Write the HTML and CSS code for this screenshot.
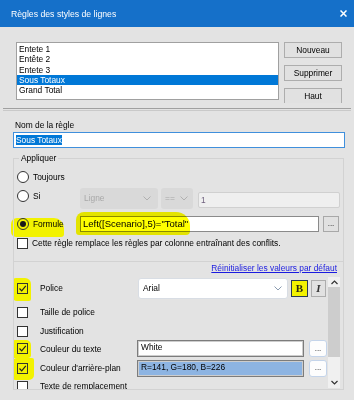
FILE: index.html
```html
<!DOCTYPE html>
<html lang="fr">

<head>
    <meta charset="UTF-8">
    <meta name="viewport" content="width=device-width, initial-scale=1.0">
    <title>Règles des styles de lignes</title>
    <link rel="stylesheet" href="styles.css">
</head>

<body>

    <div class="titlebar">
        <span>Règles des styles de lignes</span>
        <svg class="close" width="7" height="7" viewBox="0 0 7 7">
            <path d="M0.5 0.5 L6.5 6.5 M6.5 0.5 L0.5 6.5" stroke="#fff" stroke-width="1.5" />
        </svg>
    </div>

    <div class="top">
        <div class="list">
            <div class="item">Entete 1</div>
            <div class="item">Entête 2</div>
            <div class="item">Entete 3</div>
            <div class="item sel">Sous Totaux</div>
            <div class="item">Grand Total</div>
        </div>
        <div class="buttons">
            <button class="btn">Nouveau</button>
            <button class="btn">Supprimer</button>
            <button class="btn">Haut</button>
        </div>
    </div>

    <div class="splitter"></div>

    <div class="editor">
        <div class="label">Nom de la règle</div>
        <div class="namefield"><span class="seltext">Sous Totaux</span></div>

        <fieldset class="group">
            <legend>Appliquer</legend>

            <div class="row r-always">
                <div class="opt"><span class="radio"></span>Toujours</div>
            </div>

            <div class="row r-if">
                <div class="opt up"><span class="radio"></span>Si</div>
                <div class="combo off wide">Ligne
                    <svg width="8" height="5" viewBox="0 0 8 5"><path d="M0.5 0.5 L4 4 L7.5 0.5" fill="none" stroke="#b0b0b0" /></svg>
                </div>
                <div class="combo off small">==
                    <svg width="8" height="5" viewBox="0 0 8 5"><path d="M0.5 0.5 L4 4 L7.5 0.5" fill="none" stroke="#b0b0b0" /></svg>
                </div>
                <div class="field off">1</div>
            </div>

            <div class="row r-formula">
                <div class="opt hl-formule"><span class="radio on"></span>Formule</div>
                <div class="formula"><span>Left([Scenario],5)="Total"</span></div>
                <button class="dots square">...</button>
            </div>

            <div class="row r-check">
                <span class="box"></span>
                <span>Cette règle remplace les règles par colonne entraînant des conflits.</span>
            </div>
        </fieldset>

        <div class="panel">
            <div class="reset"><a href="#">Réinitialiser les valeurs par défaut</a></div>
            <div class="scrollarea">
                <div class="props">
                    <div class="prop p1">
                        <span class="box hl hl-police"><svg width="9" height="9" viewBox="0 0 9 9"><path d="M1.5 4.5 L3.7 6.8 L7.8 1.8" fill="none" stroke="#222" stroke-width="1.2" /></svg></span>
                        <span>Police</span>
                        <div class="ctrl">
                            <div class="combo fontcombo">Arial
                                <svg width="8" height="5" viewBox="0 0 8 5"><path d="M0.5 0.5 L4 4 L7.5 0.5" fill="none" stroke="#8a9bb0" /></svg>
                            </div>
                            <button class="style bold">B</button>
                            <button class="style italic">I</button>
                        </div>
                    </div>
                    <div class="prop p2">
                        <span class="box"></span>
                        <span>Taille de police</span>
                    </div>
                    <div class="prop p3">
                        <span class="box"></span>
                        <span>Justification</span>
                    </div>
                    <div class="prop p4">
                        <span class="box hl hl-text"><svg width="9" height="9" viewBox="0 0 9 9"><path d="M1.5 4.5 L3.7 6.8 L7.8 1.8" fill="none" stroke="#222" stroke-width="1.2" /></svg></span>
                        <span>Couleur du texte</span>
                        <div class="ctrl">
                            <div class="valuefield">White</div>
                            <button class="dots round">...</button>
                        </div>
                    </div>
                    <div class="prop p5">
                        <span class="box hl hl-back"><svg width="9" height="9" viewBox="0 0 9 9"><path d="M1.5 4.5 L3.7 6.8 L7.8 1.8" fill="none" stroke="#222" stroke-width="1.2" /></svg></span>
                        <span>Couleur d'arrière-plan</span>
                        <div class="ctrl">
                            <div class="valuefield backcolor">R=141, G=180, B=226</div>
                            <button class="dots round">...</button>
                        </div>
                    </div>
                    <div class="prop p6">
                        <span class="box"></span>
                        <span>Texte de remplacement</span>
                    </div>
                </div>
                <div class="scrollbar">
                    <div class="arrow">
                        <svg width="7" height="5" viewBox="0 0 7 5"><path d="M0.5 4 L3.5 1 L6.5 4" fill="none" stroke="#333" stroke-width="1.2" /></svg>
                    </div>
                    <div class="thumb"></div>
                    <div class="track"></div>
                    <div class="arrow down">
                        <svg width="7" height="5" viewBox="0 0 7 5"><path d="M0.5 1 L3.5 4 L6.5 1" fill="none" stroke="#333" stroke-width="1.2" /></svg>
                    </div>
                </div>
            </div>
        </div>
    </div>

</body>

</html>
```

FILE: styles.css
```css
* {
    box-sizing: border-box;
}

body {
    margin: 0;
    width: 354px;
    height: 400px;
    overflow: hidden;
    background-color: #e3e3e3;
    font-family: "Liberation Sans", Arial, sans-serif;
    font-size: 8.4px;
    color: #000;
}

button {
    font: inherit;
    color: #000;
    padding: 0;
}

.titlebar {
    height: 27px;
    background-color: #1570c9;
    color: white;
    display: flex;
    align-items: center;
    justify-content: space-between;
    padding: 0 7px 0 11px;
    font-size: 8.7px;
}

/* rules list */

.top {
    height: 76px;
    overflow: hidden;
    display: flex;
    align-items: flex-start;
    padding: 15px 0 0 16px;
}

.list {
    width: 263px;
    height: 58px;
    background-color: white;
    border: 1px solid #a0a0a0;
    padding-top: 1px;
}

.item {
    height: 10.3px;
    line-height: 10.3px;
    padding-left: 2px;
    white-space: nowrap;
}

.item.sel {
    background-color: #0078d7;
    color: white;
}

.buttons {
    margin-left: 5px;
    width: 58px;
    display: flex;
    flex-direction: column;
    gap: 7px;
}

.btn {
    height: 16px;
    background-color: #e1e1e1;
    border: 1px solid #adadad;
}

.splitter {
    margin: 5px 3px 0;
    height: 3px;
    border-top: 1px solid #a0a0a0;
    border-bottom: 1px solid #c9c9c9;
}

/* rule editor */

.editor {
    padding: 0 10px 0 13px;
}

.label {
    margin: 8px 0 0 2px;
    height: 12px;
    line-height: 12px;
}

.namefield {
    margin-top: 1px;
    width: 332px;
    height: 16px;
    line-height: 14px;
    background-color: white;
    border: 1px solid #3f8fdc;
    padding-left: 2px;
}

.seltext {
    background-color: #0078d7;
    color: white;
}

.group {
    margin: 4px 0 0;
    width: 331px;
    min-width: 0;
    padding: 0 0 12px 3px;
    border: 1px solid #d2d2d2;
}

.group legend {
    margin-left: 2px;
    padding: 0 2px;
    height: 12px;
    line-height: 12px;
}

.row {
    display: flex;
    align-items: center;
}

.r-always {
    margin-top: 6px;
    height: 14px;
}

.r-if {
    margin-top: 3px;
    height: 22px;
}

.r-formula {
    margin-top: 4px;
    height: 22px;
}

.r-check {
    margin-top: 2px;
    height: 12px;
    gap: 4px;
}

.opt {
    display: flex;
    align-items: center;
    gap: 4px;
    width: 63px;
    flex-shrink: 0;
}

.opt.up {
    margin-top: -4px;
}

.radio {
    width: 12px;
    height: 12px;
    border: 1px solid #333;
    border-radius: 50%;
    background-color: white;
    display: flex;
    align-items: center;
    justify-content: center;
}

.radio.on::after {
    content: "";
    width: 6px;
    height: 6px;
    border-radius: 50%;
    background-color: #1a1a1a;
}

.combo {
    height: 21px;
    border-radius: 3px;
    display: flex;
    align-items: center;
    justify-content: space-between;
    padding: 0 7px 0 4px;
}

.combo.off {
    background-color: #d9d9d9;
    color: #a8a8a8;
}

.combo.wide {
    width: 78px;
}

.combo.small {
    width: 32px;
    margin-left: 3px;
    padding-right: 5px;
}

.field.off {
    margin-left: 5px;
    width: 142px;
    height: 16px;
    line-height: 14px;
    background-color: #efefef;
    border: 1px solid #d0d0d0;
    border-radius: 2px;
    padding-left: 2px;
    color: #6f607e;
    margin-top: 3px;
}

.formula {
    position: relative;
    width: 239px;
    height: 16px;
    line-height: 14px;
    background-color: white;
    border: 1px solid #8a8a8a;
    padding-left: 2px;
    font-size: 9.5px;
    white-space: nowrap;
}

.dots {
    height: 16px;
    line-height: 12px;
    font-size: 8px;
}

.dots.square {
    margin-left: 4px;
    width: 16px;
    background-color: #e1e1e1;
    border: 1px solid #a8a8a8;
}

.box {
    position: relative;
    width: 11px;
    height: 11px;
    border: 1px solid #333;
    background-color: white;
    flex-shrink: 0;
    display: flex;
    align-items: center;
    justify-content: center;
}

/* marker highlights drawn over the screenshot */

.hl-formule,
.formula,
.hl {
    position: relative;
}

.hl-formule::after,
.formula::after,
.hl::after {
    content: "";
    position: absolute;
    background-color: #f2f200;
    z-index: -1;
    pointer-events: none;
}

.hl-formule .radio,
.hl.box {
    background-color: transparent;
}

.formula::after {
    z-index: auto;
    background-color: #ffff00;
    mix-blend-mode: multiply;
}

.hl-formule::after {
    left: -6px;
    top: 0;
    width: 53px;
    height: 19px;
    border-radius: 6px 10px 3px 5px;
}

.formula::after {
    left: -5px;
    top: -5px;
    width: 114px;
    height: 23px;
    border-radius: 8px 14px 4px 3px;
}

.hl-police::after {
    left: -5px;
    top: -6px;
    width: 18px;
    height: 23px;
    border-radius: 3px 6px 2px 4px;
}

.hl-text::after {
    left: -5px;
    top: -4px;
    width: 18px;
    height: 18px;
    border-radius: 2px 5px 3px 2px;
}

.hl-back::after {
    left: -5px;
    top: -6px;
    width: 21px;
    height: 22px;
    border-radius: 4px 2px 5px 3px;
}

/* formatting panel */

.panel {
    width: 331px;
    height: 128px;
    border: 1px solid #d2d2d2;
    border-top: none;
}

.reset {
    height: 12px;
    line-height: 12px;
    text-align: right;
    padding-right: 6px;
}

.reset a {
    color: #1a1ae0;
}

.scrollarea {
    height: 115px;
    display: flex;
    overflow: hidden;
}

.props {
    flex: 1;
    padding: 2px 0 0 3px;
}

.prop {
    display: grid;
    grid-template-columns: 23px 97px 1fr;
    align-items: center;
}

.p1 {
    height: 24px;
}

.p2 {
    height: 24px;
}

.p3 {
    height: 14px;
}

.p4 {
    height: 21px;
}

.p5 {
    height: 18px;
}

.p6 {
    height: 18px;
}

.ctrl {
    display: flex;
    align-items: center;
}

.fontcombo {
    margin-left: 1px;
    width: 150px;
    background-color: white;
    border: 1px solid #d8dde4;
    padding-right: 5px;
}

.style {
    margin-left: 3px;
    height: 17px;
    font-family: "Liberation Serif", serif;
    font-size: 11px;
    line-height: 14px;
}

.style.bold {
    width: 17px;
    font-weight: bold;
    background-color: #f2f200;
    border: 1px solid #2a3a50;
    color: #2a2a10;
}

.style.italic {
    width: 15px;
    font-style: italic;
    font-weight: bold;
    background-color: #e1e1e1;
    border: 1px solid #adadad;
    color: #333;
}

.valuefield {
    width: 167px;
    height: 17px;
    line-height: 13px;
    background-color: white;
    border: 1px solid #7c7c7c;
    box-shadow: inset 0 0 0 1px #cdcdcd;
    padding-left: 3px;
}

.valuefield.backcolor {
    background-color: #8db4e2;
}

.dots.round {
    margin-left: 5px;
    width: 18px;
    height: 17px;
    background-color: #fdfdfd;
    border: 1px solid #c4d4ea;
    border-radius: 3px;
}

.scrollbar {
    width: 12px;
    margin: 3px 3px 1px 0;
    background-color: #f0f0f0;
    display: flex;
    flex-direction: column;
}

.arrow {
    height: 10px;
    display: flex;
    align-items: center;
    justify-content: center;
}

.arrow.down {
    height: 12px;
}

.thumb {
    height: 70px;
    background-color: #cdcdcd;
}

.track {
    flex: 1;
}
```
